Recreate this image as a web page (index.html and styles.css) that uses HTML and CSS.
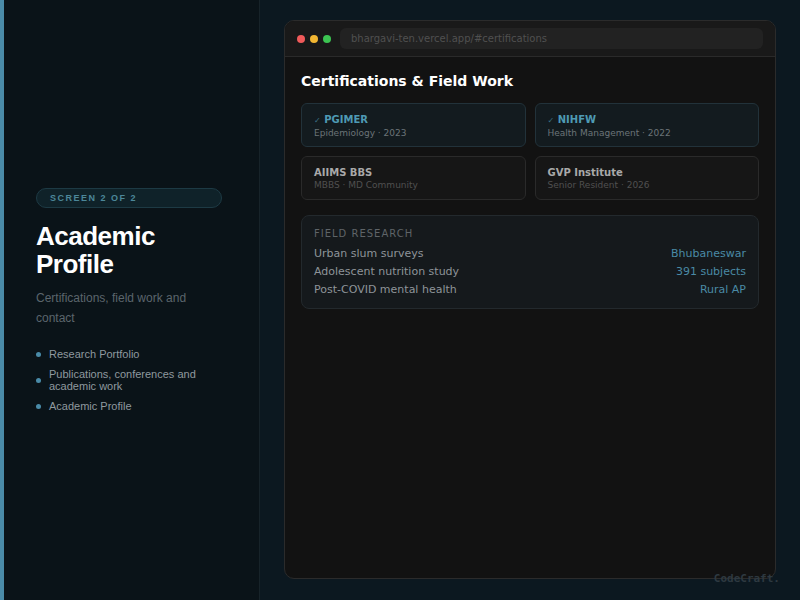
FILE: index.html
```html
<!DOCTYPE html>
<html lang="en">
<head>
  <meta charset="UTF-8" />
  <title>Academic Profile</title>
  <link rel="stylesheet" href="styles.css">
</head>
<body>
  <div class="side">
    <div class="side-inner">
      <div class="badge">SCREEN 2 OF 2</div>
      <h1>Academic<br />Profile</h1>
      <p class="sub">Certifications, field work and contact</p>
      <ul class="points">
        <li>Research Portfolio</li>
        <li>Publications, conferences and academic work</li>
        <li>Academic Profile</li>
      </ul>
    </div>
  </div>

  <div class="stage">
    <div class="window">
      <div class="titlebar">
        <span class="dot red"></span>
        <span class="dot yellow"></span>
        <span class="dot green"></span>
        <div class="url">bhargavi-ten.vercel.app/#certifications</div>
      </div>
      <div class="content">
        <h2>Certifications &amp; Field Work</h2>
        <div class="certs">
          <div class="cert done">
            <div class="cert-title"><span class="tick">✓</span> PGIMER</div>
            <div class="cert-sub">Epidemiology · 2023</div>
          </div>
          <div class="cert done">
            <div class="cert-title"><span class="tick">✓</span> NIHFW</div>
            <div class="cert-sub">Health Management · 2022</div>
          </div>
          <div class="cert">
            <div class="cert-title">AIIMS BBS</div>
            <div class="cert-sub">MBBS · MD Community</div>
          </div>
          <div class="cert">
            <div class="cert-title">GVP Institute</div>
            <div class="cert-sub">Senior Resident · 2026</div>
          </div>
        </div>
        <div class="field">
          <div class="field-label">FIELD RESEARCH</div>
          <div class="row"><span>Urban slum surveys</span><span class="val">Bhubaneswar</span></div>
          <div class="row"><span>Adolescent nutrition study</span><span class="val">391 subjects</span></div>
          <div class="row"><span>Post-COVID mental health</span><span class="val">Rural AP</span></div>
        </div>
      </div>
    </div>
    <div class="mark">CodeCraft.</div>
  </div>
</body>
</html>
```

FILE: styles.css
```css
* { box-sizing: border-box; }
html, body { height: 100%; }
body {
  margin: 0;
  display: flex;
  background: #0c1820;
  font-family: 'Liberation Sans', Arial, sans-serif;
  overflow: hidden;
}

/* left column */
.side {
  width: 260px;
  flex-shrink: 0;
  background: #0a1318;
  border-left: 4px solid #4a8ba8;
  border-right: 1px solid #172329;
  display: flex;
  align-items: center;
  padding: 0 37px 0 32px;
}
.side-inner { width: 100%; margin-top: 8px; }
.badge {
  height: 20px;
  border-radius: 10px;
  border: 1px solid #1d3a44;
  background: #0f2229;
  color: #4c8799;
  font-size: 9px;
  font-weight: 700;
  letter-spacing: 1.5px;
  line-height: 18px;
  padding-left: 13px;
}
h1 {
  margin: 14px 0 0;
  color: #fff;
  font-size: 26px;
  line-height: 28px;
  font-weight: 700;
  letter-spacing: -0.5px;
}
.sub {
  margin: 10px 0 0;
  color: #5b656c;
  font-size: 12px;
  line-height: 20px;
  padding-right: 20px;
}
.points {
  list-style: none;
  margin: 20px 0 0;
  padding: 0;
}
.points li {
  position: relative;
  padding-left: 13px;
  color: #8f999f;
  font-size: 11px;
  line-height: 12px;
  margin-bottom: 8px;
  display: flex;
  align-items: center;
  min-height: 12px;
}
.points li::before {
  content: '';
  position: absolute;
  left: 0;
  top: 50%;
  width: 5px;
  height: 5px;
  margin-top: -2px;
  border-radius: 50%;
  background: #4a8ba8;
}

/* right stage */
.stage {
  flex: 1;
  position: relative;
  padding: 20px 24px 21px;
  display: flex;
}
.window {
  flex: 1;
  background: #121212;
  border: 1px solid #2b2b2b;
  border-radius: 10px;
  overflow: hidden;
  font-family: 'DejaVu Sans', sans-serif;
}
.titlebar {
  height: 36px;
  background: #191919;
  border-bottom: 1px solid #2a2a2a;
  display: flex;
  align-items: center;
  padding: 0 12px 0 12px;
}
.dot {
  width: 8px;
  height: 8px;
  border-radius: 50%;
  margin-right: 5px;
}
.red { background: #f05a5a; }
.yellow { background: #f2b632; }
.green { background: #3cc452; }
.url {
  flex: 1;
  margin-left: 4px;
  height: 21px;
  border-radius: 6px;
  background: #222;
  color: #505050;
  font-size: 10px;
  line-height: 21px;
  padding-left: 11px;
}
.content { padding: 16px 16px; }
h2 {
  margin: 0;
  color: #fff;
  font-size: 14px;
  line-height: 16px;
  font-weight: 700;
}
.certs {
  margin-top: 14px;
  display: grid;
  grid-template-columns: 1fr 1fr;
  gap: 9px;
}
.cert {
  height: 44px;
  border-radius: 6px;
  border: 1px solid #2a2a2a;
  background: #161616;
  padding: 9px 12px 0;
}
.cert.done {
  background: #131b1f;
  border-color: #22323a;
}
.cert-title {
  color: #a9a9a9;
  font-size: 10px;
  font-weight: 700;
  line-height: 13px;
}
.tick { font-size: 8px; font-weight: 400; color: #3d7388; }
.cert-sub {
  color: #505050;
  font-size: 9px;
  line-height: 12px;
  margin-top: 0;
}
.cert.done .cert-title { color: #4e9ab4; }
.cert.done .cert-sub { color: #6b7478; }
.field {
  margin-top: 15px;
  border-radius: 8px;
  border: 1px solid #23292d;
  background: #15191c;
  padding: 11px 12px 9px;
}
.field-label {
  color: #5f6468;
  font-size: 10px;
  letter-spacing: 1px;
  line-height: 14px;
  margin-bottom: 4px;
}
.row {
  display: flex;
  justify-content: space-between;
  color: #8e9499;
  font-size: 11px;
  line-height: 18px;
}
.row .val { color: #4a8aa5; }
.mark {
  position: absolute;
  right: 20px;
  bottom: 15px;
  font-family: 'DejaVu Sans Mono', monospace;
  font-weight: 700;
  font-size: 11px;
  color: #2e3940;
}
```
